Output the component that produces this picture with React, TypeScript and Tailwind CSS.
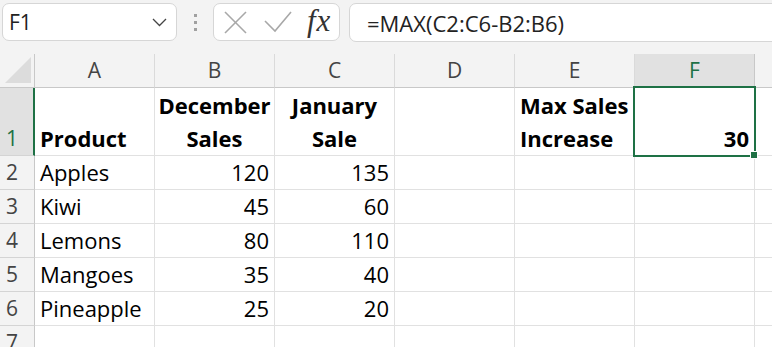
import React from 'react';

const rows = [
  ['Apples', '120', '135'],
  ['Kiwi', '45', '60'],
  ['Lemons', '80', '110'],
  ['Mangoes', '35', '40'],
  ['Pineapple', '25', '20'],
];

const base = "border-r border-b border-[#e1e1e1] bg-white flex leading-[33px] text-[22px] text-black font-['Open_Sans',sans-serif] whitespace-nowrap";
const cellL = `${base} items-end justify-start pl-[5px]`;
const cellR = `${base} items-end justify-end pr-[5px]`;
const cellEmpty = `${base}`;
const cellStackC = `${base} flex-col justify-end items-center font-bold`;
const cellStackL = `${base} flex-col justify-end items-start pl-[5px] font-bold`;
const rowHead = "border-r border-b border-r-[#c8c8c8] border-b-[#d4d4d4] bg-[#f3f3f3] flex items-end pl-[6px] leading-[33px] text-[21px] text-[#444] font-['Open_Sans',sans-serif]";

export default function App() {
  return (
    <div className="w-[772px] h-[347px] overflow-hidden bg-[#f3f3f3] font-['Open_Sans',sans-serif]">
      {/* toolbar */}
      <div className="flex items-start h-[54px] pt-[3px] pl-[2px]">
        <div className="w-[175px] h-[38px] bg-white border border-[#d6d6d6] rounded-[7px] flex items-center justify-between pl-[6px] pr-[9px]">
          <span className="text-[21px] text-[#222] leading-none">F1</span>
          <svg width="15" height="9" viewBox="0 0 15 9" fill="none">
            <polyline points="1,1 7.5,7.5 14,1" stroke="#444" strokeWidth="1.3" />
          </svg>
        </div>
        <div className="w-[36px] h-[38px] flex flex-col items-center justify-center gap-[4px]">
          <div className="w-[3px] h-[3px] bg-[#a0a0a0]" />
          <div className="w-[3px] h-[3px] bg-[#a0a0a0]" />
          <div className="w-[3px] h-[3px] bg-[#a0a0a0]" />
        </div>
        <div className="w-[127px] h-[38px] bg-white border border-[#d6d6d6] rounded-[7px] flex items-center pl-[10px]">
          <svg width="23" height="23" viewBox="0 0 23 23" fill="none">
            <line x1="1" y1="1" x2="22" y2="22" stroke="#a8a8a8" strokeWidth="1.6" />
            <line x1="22" y1="1" x2="1" y2="22" stroke="#a8a8a8" strokeWidth="1.6" />
          </svg>
          <svg className="ml-[17px]" width="28" height="22" viewBox="0 0 28 22" fill="none">
            <polyline points="1,10 11,20 27,1" stroke="#a8a8a8" strokeWidth="1.6" />
          </svg>
          <span className="ml-[15px] italic text-[31px] leading-none text-[#333] font-['Liberation_Serif',serif] tracking-[1px] -mt-[3px]">fx</span>
        </div>
        <div className="ml-[9px] flex-1 -mr-[20px] h-[39px] bg-white border border-[#d6d6d6] rounded-[7px] flex items-center pl-[17px]">
          <span className="text-[22px] leading-none text-[#222]">=MAX(C2:C6-B2:B6)</span>
        </div>
      </div>

      {/* grid */}
      <div className="grid grid-cols-[35px_120px_120px_120px_120px_120px_120px_120px] grid-rows-[34px_68px_34px_34px_34px_34px_34px_34px]">
        {/* header row */}
        <div className="border-r border-b border-[#c8c8c8] bg-[#f3f3f3] flex items-end justify-start pl-[5px] pb-[4px]">
          <svg width="27" height="26" viewBox="0 0 27 26">
            <polygon points="26,0 26,26 0,26" fill="#dcdcdc" />
          </svg>
        </div>
        {['A', 'B', 'C', 'D', 'E'].map((c) => (
          <div key={c} className="border-r border-b border-r-[#dadada] border-b-[#c8c8c8] bg-[#f3f3f3] flex items-center justify-center text-[21px] text-[#444]">
            {c}
          </div>
        ))}
        <div className="border-r border-b border-r-[#c8c8c8] border-b-[#1e7145] bg-[#e1e1e1] flex items-center justify-center text-[21px] text-[#1e7145]">
          F
        </div>
        <div className="border-b border-[#c8c8c8] bg-[#f3f3f3]" />

        {/* row 1 */}
        <div className="border-r-2 border-b border-r-[#1e7145] border-b-[#d4d4d4] bg-[#e1e1e1] flex items-end pl-[6px] leading-[33px] text-[21px] text-[#1e7145]">
          1
        </div>
        <div className={`${cellL} font-bold`}>Product</div>
        <div className={cellStackC}>
          <span>December</span>
          <span>Sales</span>
        </div>
        <div className={cellStackC}>
          <span>January</span>
          <span>Sale</span>
        </div>
        <div className={cellEmpty} />
        <div className={cellStackL}>
          <span>Max Sales</span>
          <span>Increase</span>
        </div>
        <div className={`${cellR} relative font-bold`}>
          30
          <div className="absolute -inset-[2px] border-2 border-[#1e7145] z-10 pointer-events-none" />
          <div className="absolute right-[-4px] bottom-[-4px] w-[8px] h-[8px] bg-[#1e7145] border border-white z-20" />
        </div>
        <div className={cellEmpty} />

        {rows.map((r, i) => (
          <React.Fragment key={i}>
            <div className={rowHead}>{i + 2}</div>
            <div className={cellL}>{r[0]}</div>
            <div className={cellR}>{r[1]}</div>
            <div className={cellR}>{r[2]}</div>
            <div className={cellEmpty} />
            <div className={cellEmpty} />
            <div className={cellEmpty} />
            <div className={cellEmpty} />
          </React.Fragment>
        ))}

        <div className={rowHead}>7</div>
        {[0, 1, 2, 3, 4, 5, 6].map((k) => (
          <div key={k} className={cellEmpty} />
        ))}
      </div>
    </div>
  );
}
